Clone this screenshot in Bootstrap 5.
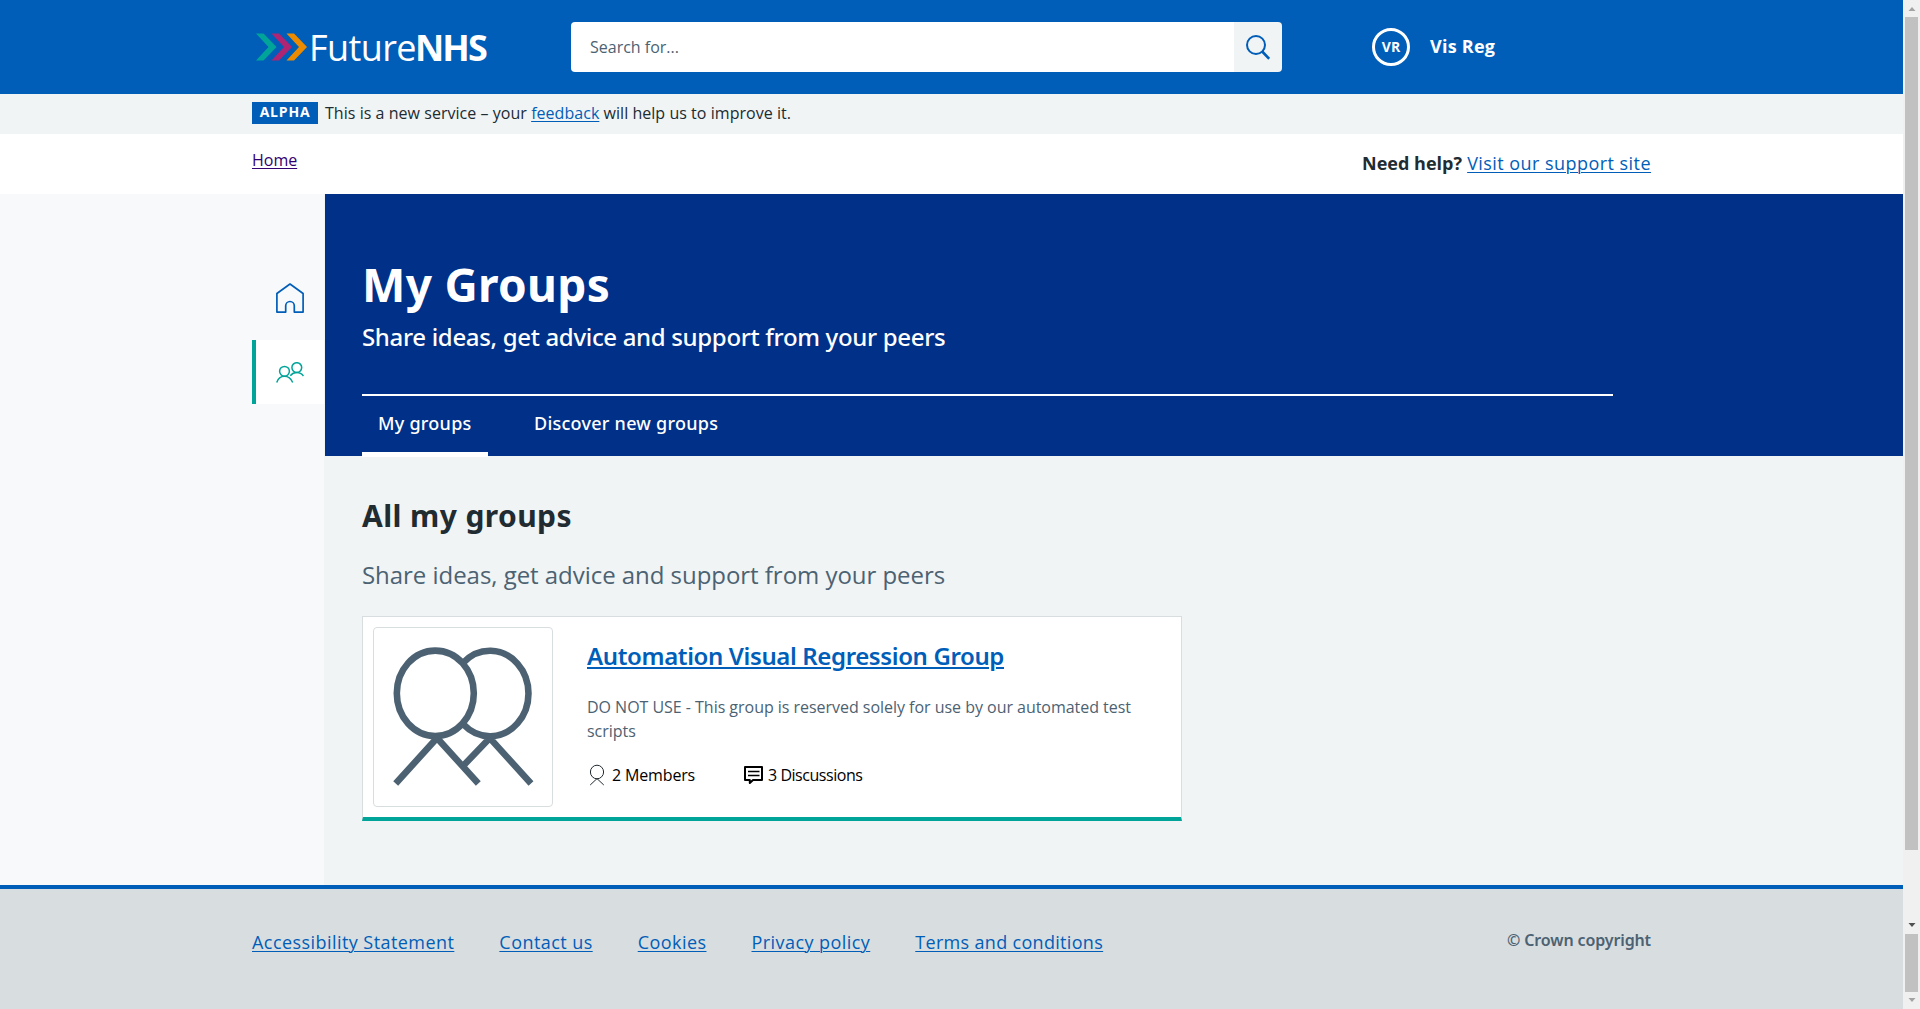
<!DOCTYPE html>
<html lang="en">
<head>
<meta charset="utf-8">
<title>My Groups - FutureNHS</title>
<meta name="viewport" content="width=device-width, initial-scale=1">
<link rel="stylesheet" href="https://cdn.jsdelivr.net/npm/bootstrap@5.3.0/dist/css/bootstrap.min.css">
<style>
  body { font: 16px/24px "Open Sans", "Noto Sans", sans-serif; color: #212b32; height: 1009px; overflow: hidden; background: #fff; }
  a { color: #005eb8; text-underline-offset: 2px; text-decoration-thickness: 1px; }
  svg { display: block; flex: none; }
  .wrap { width: 1399px; margin-left: 252px; }
  .t18 { font-size: 18px; line-height: 28px; letter-spacing: .45px; }

  .site-header { background: #005eb8; height: 94px; }
  .logo { width: 319px; padding-left: 4px; color: #fff; font-size: 36px; line-height: 36px; }
  .logo-light { letter-spacing: -.6px; margin-left: 1px; padding-top: 2px; }
  .logo-bold { letter-spacing: -1.800px; margin-left: -1px; padding-top: 2px; }
  .search { width: 711px; height: 50px; }
  .search .form-control { border: 0; border-radius: 4px 0 0 4px; padding: 0 19px; font-size: 16px; }
  .search .form-control::placeholder { color: #4c6272; opacity: 1; }
  .search .btn { width: 48px; flex: none; background: #f0f4f5; border: 0; border-radius: 0 4px 4px 0; padding: 0 0 0 12px; }
  .avatar { width: 38px; height: 38px; border: 3px solid #fff; font-size: 14px; line-height: 14px; margin-left: 90px; }
  .user-name { font-size: 18px; margin-left: 20px; padding-bottom: 2px; letter-spacing: .25px; }

  .beta { background: #f0f4f5; height: 40px; padding-top: 7px; letter-spacing: .04px; }
  .tag { background: #005eb8; color: #fff; font-size: 14px; line-height: 20px; letter-spacing: .8px; width: 66px; height: 22px; margin: 1px 7px 0 0; text-align: center; }
  .crumbs { height: 60px; padding-top: 14px; }
  .visited { color: #330072; }
  .help { padding-top: 1px; }
  .help strong { letter-spacing: 0; }

  .main-area { height: 691px; }
  .side { width: 324px; background: #f8f9fb; padding: 72px 0 0 252px; }
  .side a { height: 64px; border-left: 4px solid transparent; margin-bottom: 10px; }
  .side a.current { background: #fff; border-left-color: #00a499; }
  .content-area { background: #f0f4f5; }
  .hero { background: #003087; height: 262px; margin-left: 1px; padding: 62px 0 0 37px; font-family: "Noto Sans", "Open Sans", sans-serif; }
  .hero h1 { font-size: 46px; line-height: 56px; letter-spacing: .3px; }
  .intro { font-size: 24px; line-height: 32px; letter-spacing: -.04px; }
  .hero .intro { font-weight: 500; letter-spacing: -.33px; margin-top: 9px; }
  .tabs { width: 1251px; border-top: 2px solid #fff; margin-top: 41px; gap: 30px; font-weight: 500; letter-spacing: .25px; }
  .tabs a { padding: 13px 16px 15px; border-bottom: 5px solid transparent; }
  .tabs a.current { border-bottom-color: #fff; width: 126px; white-space: nowrap; }
  .groups { padding: 40px 0 0 38px; }
  .groups h2 { font: 700 30px/40px "Noto Sans", sans-serif; letter-spacing: .4px; }
  .groups .intro { margin-top: 23px; }
  .muted { color: #4c6272; }
  .group-card { width: 820px; height: 205px; border: 1px solid #d8dde0; border-bottom: 4px solid #00a499; padding: 10px; margin-top: 25px; gap: 34px; }
  .thumb { width: 180px; height: 180px; border: 1px solid #d8dde0; border-radius: 4px; }
  .group-card h3 { font: 600 24px/32px "Noto Sans", sans-serif; letter-spacing: -.38px; margin: 13px 0 23px; }
  .group-card h3 a { text-decoration-thickness: 2px; }
  .group-card p { letter-spacing: -.03px; }
  .meta { color: #000; margin-top: 20px; }
  .meta-members { width: 157px; letter-spacing: -.15px; }
  .meta-discussions { letter-spacing: -.46px; }

  .site-footer { background: #d8dde0; border-top: 4px solid #005eb8; padding-top: 39px; height: 124px; }
  .links { gap: 45px; letter-spacing: .44px; }
  .links a:last-child { letter-spacing: .32px; }
  .crown { font-family: "Noto Sans", sans-serif; font-weight: 600; letter-spacing: -.12px; }

  .bar { width: 17px; background: #f0f0f0; }
  .bar i { display: block; width: 13px; margin-left: 2px; background: #c1c1c1; }
  .bar svg { margin-left: 5px; }
</style>
<script src="https://cdn.jsdelivr.net/npm/bootstrap@5.3.0/dist/js/bootstrap.bundle.min.js"></script>
</head>
<body class="d-flex">
<div class="flex-grow-1">
  <header class="site-header d-flex">
    <div class="wrap d-flex align-items-center">
      <div class="logo d-flex align-items-center">
        <svg width="52" height="28" viewBox="0 0 52 28"><path fill="#00a499" d="M0 .5h7.500L20.500 14 7.500 27.500H0L12.500 14z"/><path fill="#ae2573" d="M15.500 .5H23L36 14 23 27.500h-7.500L28 14z"/><path fill="#ed8b00" d="M30.500 .5H38L51 14 38 27.500h-7.500L43 14z"/></svg>
        <span class="logo-light">Future</span><b class="logo-bold">NHS</b>
      </div>
      <form class="search d-flex">
        <input class="form-control shadow-none" placeholder="Search for..." aria-label="Search">
        <button class="btn" type="button" aria-label="Submit search"><svg width="24" height="26" viewBox="0 0 24 26" fill="none" stroke="#005eb8" stroke-width="2"><circle cx="10" cy="11" r="9"/><path d="M16.200 17.500l7 7.300" stroke-width="2.600"/></svg></button>
      </form>
      <span class="avatar rounded-circle d-flex align-items-center justify-content-center text-white fw-bold">VR</span>
      <span class="user-name text-white fw-bold">Vis Reg</span>
    </div>
  </header>
  <div class="beta"><div class="wrap d-flex"><strong class="tag">ALPHA</strong><span>This is a new service – your <a href="#">feedback</a> will help us to improve it.</span></div></div>
  <div class="crumbs"><div class="wrap d-flex justify-content-between"><a class="visited" href="#">Home</a><div class="t18 help"><strong>Need help?</strong> <a href="#">Visit our support site</a></div></div></div>

  <div class="main-area d-flex">
    <nav class="side flex-shrink-0">
      <a href="#" class="d-flex align-items-center justify-content-center" aria-label="Home"><svg width="28" height="30" viewBox="0 0 28 30" fill="none" stroke="#005eb8" stroke-width="1.700" stroke-linejoin="round"><path d="M.9 10.500L14 1l13.100 9.500v18.600h-8.800v-6.300a4.300 4.300 0 0 0-8.600 0v6.300H.9z"/></svg></a>
      <a href="#" class="current d-flex align-items-center justify-content-center" aria-label="Groups"><svg width="28" height="21" viewBox="0 0 28 21" fill="none" stroke="#00a499" stroke-width="1.500"><circle cx="8.500" cy="9.300" r="4.900"/><circle cx="20.800" cy="5.600" r="4.900"/><path d="M.7 20.500C2 16.500 5 14.300 8.500 14.300s6.500 2.200 8.200 6.200M14.300 13.800c1.600-2 3.900-3.200 6.500-3.200s5 1.200 6.700 3.400"/></svg></a>
    </nav>
    <main class="content-area flex-grow-1">
      <section class="hero text-white">
        <h1 class="fw-bold m-0">My Groups</h1>
        <p class="intro mb-0">Share ideas, get advice and support from your peers</p>
        <nav class="t18 tabs d-flex">
          <a href="#" class="current text-white text-decoration-none">My groups</a>
          <a href="#" class="text-white text-decoration-none">Discover new groups</a>
        </nav>
      </section>
      <section class="groups">
        <h2 class="m-0">All my groups</h2>
        <p class="intro muted mb-0">Share ideas, get advice and support from your peers</p>
        <article class="group-card bg-white d-flex">
          <div class="thumb flex-shrink-0"><svg width="178" height="178" viewBox="1 1 178 178" fill="none" stroke="#4c6272" stroke-width="6.600"><ellipse cx="62.300" cy="66.300" rx="38.500" ry="42.700"/><path d="M90.500 35.500A38.500 42.700 0 1 1 90.500 97.500M22.700 156.500L64 111l41.300 45.500M90 139l26.800-28 41.200 45.500"/></svg></div>
          <div>
            <h3><a href="#">Automation Visual Regression Group</a></h3>
            <p class="muted mb-0">DO NOT USE - This group is reserved solely for use by our automated test scripts</p>
            <div class="meta d-flex">
              <span class="meta-members d-flex"><svg width="25" height="24" viewBox="0 0 25 24" fill="none" stroke="#212b32" stroke-width="1"><ellipse cx="10" cy="9" rx="6.600" ry="6.800"/><path d="M3.200 22L10 15.600 16.800 22"/></svg>2 Members</span>
              <span class="meta-discussions d-flex"><svg width="24" height="24" viewBox="0 0 24 24" fill="none" stroke="#000" stroke-width="2" stroke-linejoin="round"><path d="M1 4h17v13H9l-3.200 3v-3H1z"/><path d="M4 8.500h11.500M4 12.500h11.500" stroke-width="1.600"/></svg>3 Discussions</span>
            </div>
          </div>
        </article>
      </section>
    </main>
  </div>

  <footer class="site-footer">
    <div class="wrap d-flex justify-content-between">
      <nav class="t18 links d-flex"><a href="#">Accessibility Statement</a><a href="#">Contact us</a><a href="#">Cookies</a><a href="#">Privacy policy</a><a href="#">Terms and conditions</a></nav>
      <span class="crown muted">© Crown copyright</span>
    </div>
  </footer>
</div>
<div class="bar flex-shrink-0" aria-hidden="true">
  <svg width="8" height="17"><path fill="#a3a3a3" d="M.5 11L4 7l3.500 4z"/></svg>
  <i style="height:833px"></i>
  <svg width="8" height="84"><path fill="#505050" d="M.5 73L4 77l3.500-4z"/></svg>
  <i style="height:58px"></i>
  <svg width="8" height="17"><path fill="#a3a3a3" d="M.5 6L4 10l3.500-4z"/></svg>
</div>
</body>
</html>
